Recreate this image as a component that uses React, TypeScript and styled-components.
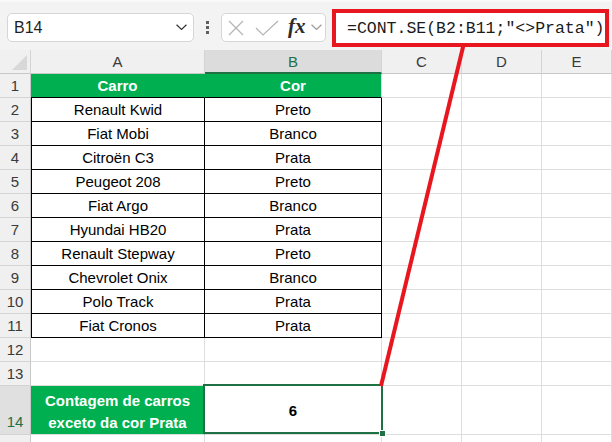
import React from "react";
import styled, { createGlobalStyle, css } from "styled-components";

const GlobalStyle = createGlobalStyle`
  html, body {
    margin: 0;
    padding: 0;
    background: #fff;
  }
  body {
    overflow: hidden;
    font-family: "Liberation Sans", Arial, sans-serif;
  }
`;

const GREEN_FILL = "#00b050";
const SEL_GREEN = "#1e7145";
const GRID = "#dedede";
const RED = "#e8161e";

const Page = styled.div`
  position: relative;
  width: 612px;
  height: 442px;
  overflow: hidden;
  background: #fff;
`;

const Toolbar = styled.div`
  box-sizing: border-box;
  height: 50px;
  display: flex;
  align-items: flex-start;
  padding: 13px 0 0 7px;
  background: #f3f3f3;
  border-top: 2px solid #f9f9f9;
`;

const NameBox = styled.div`
  box-sizing: border-box;
  width: 187px;
  height: 29px;
  margin-top: -2px;
  display: flex;
  align-items: center;
  justify-content: space-between;
  padding: 0 6px 0 6px;
  background: #fff;
  border: 1px solid #d6d6d6;
  border-radius: 5px;
  font-size: 16px;
  color: #1f1f1f;
`;

const Dots = styled.div`
  margin: 6px 0 0 12px;
  display: flex;
  flex-direction: column;
  gap: 2px;

  i {
    display: block;
    width: 3px;
    height: 3px;
    background: #5f5f5f;
  }
`;

const FxBox = styled.div`
  box-sizing: border-box;
  width: 105px;
  height: 29px;
  margin: -2px 0 0 12px;
  display: flex;
  align-items: center;
  padding-left: 6px;
  background: #fff;
  border: 1px solid #d6d6d6;
  border-radius: 5px;
`;

const Fx = styled.span`
  margin: 0 5px 2px 9px;
  font-family: "Liberation Serif", "Times New Roman", serif;
  font-style: italic;
  font-weight: 600;
  font-size: 21px;
  color: #2b2b2b;
  line-height: 1;
`;

const FormulaBar = styled.div`
  box-sizing: border-box;
  width: 277px;
  height: 38px;
  margin: -6px 0 0 6px;
  display: flex;
  align-items: center;
  padding-left: 11px;
  background: #fff;
  border: 4px solid ${RED};
  font-family: "Liberation Mono", "Courier New", monospace;
  font-size: 16.5px;
  color: #1a1a1a;
  white-space: pre;
`;

const Sheet = styled.div`
  display: grid;
  grid-template-columns: 31px 174px 177px 80px 80px 1fr;
  grid-template-rows: 24px repeat(13, 24px) 49px 24px;
  font-size: 15px;
`;

const Corner = styled.div`
  box-sizing: border-box;
  display: flex;
  align-items: flex-end;
  justify-content: flex-end;
  padding: 0 3px 3px 0;
  background: #f0f0f0;
  border-right: 1px solid #d4d4d4;
  border-bottom: 1px solid #c8c8c8;

  i {
    display: block;
    width: 15px;
    height: 15px;
    background: #d8d8d8;
    clip-path: polygon(100% 0, 100% 100%, 0 100%);
  }
`;

const ColHead = styled.div<{ $active?: boolean }>`
  box-sizing: border-box;
  display: flex;
  align-items: center;
  justify-content: center;
  background: ${({ $active }) => ($active ? "#dcdcdc" : "#f0f0f0")};
  color: ${({ $active }) => ($active ? SEL_GREEN : "#3a3a3a")};
  border-right: 1px solid #d4d4d4;
  border-bottom: ${({ $active }) =>
    $active ? `2px solid ${SEL_GREEN}` : "1px solid #c8c8c8"};
  padding-top: ${({ $active }) => ($active ? "1px" : "0")};
`;

const RowHead = styled.div<{ $active?: boolean }>`
  box-sizing: border-box;
  display: flex;
  align-items: ${({ $active }) => ($active ? "flex-end" : "center")};
  justify-content: center;
  padding-bottom: ${({ $active }) => ($active ? "4px" : "0")};
  background: ${({ $active }) => ($active ? "#e0e0e0" : "#f0f0f0")};
  color: ${({ $active }) => ($active ? SEL_GREEN : "#3a3a3a")};
  border-right: 1px solid #c8c8c8;
  border-bottom: 1px solid #d4d4d4;
`;

type Kind = "blank" | "title" | "data" | "label" | "result";

const Cell = styled.div<{ $kind: Kind; $first?: boolean }>`
  box-sizing: border-box;
  position: relative;
  display: flex;
  align-items: center;
  justify-content: center;
  text-align: center;
  color: #000;
  border-right: 1px solid ${GRID};
  border-bottom: 1px solid ${GRID};

  ${({ $kind, $first }) => {
    switch ($kind) {
      case "title":
        return css`
          background: ${GREEN_FILL};
          color: #fff;
          font-weight: bold;
          border-bottom-color: #000;
          border-right-color: ${$first ? GREEN_FILL : GRID};
        `;
      case "data":
        return css`
          border-right-color: #000;
          border-bottom-color: #000;
          ${$first && "border-left: 1px solid #000;"}
        `;
      case "label":
        return css`
          background: ${GREEN_FILL};
          color: #fff;
          font-weight: bold;
          line-height: 22px;
          padding-top: 3px;
          border-right-color: ${GREEN_FILL};
        `;
      case "result":
        return css`
          font-weight: bold;
          z-index: 2;
          &::after {
            content: "";
            position: absolute;
            left: -2px;
            top: -2px;
            right: -2px;
            bottom: 0;
            border: 2px solid ${SEL_GREEN};
          }
          &::before {
            content: "";
            position: absolute;
            right: -5px;
            bottom: -3px;
            width: 5px;
            height: 5px;
            background: ${SEL_GREEN};
            border: 1px solid #fff;
            z-index: 3;
          }
        `;
      default:
        return "";
    }
  }}
`;

const Callout = styled.svg`
  position: absolute;
  left: 0;
  top: 0;
  pointer-events: none;
  z-index: 5;
`;

const cars: [string, string][] = [
  ["Renault Kwid", "Preto"],
  ["Fiat Mobi", "Branco"],
  ["Citroën C3", "Prata"],
  ["Peugeot 208", "Preto"],
  ["Fiat Argo", "Branco"],
  ["Hyundai HB20", "Prata"],
  ["Renault Stepway", "Preto"],
  ["Chevrolet Onix", "Branco"],
  ["Polo Track", "Prata"],
  ["Fiat Cronos", "Prata"],
];

const columns = ["A", "B", "C", "D", "E"];

const Chevron = ({ size, color }: { size: number; color: string }) => (
  <svg width={size} height={size * 0.6} viewBox="0 0 10 6">
    <polyline
      points="0.5,0.7 5,5 9.5,0.7"
      fill="none"
      stroke={color}
      strokeWidth="1.1"
    />
  </svg>
);

const Blanks = ({ row }: { row: number }) => (
  <>
    <RowHead>{row}</RowHead>
    {columns.map((c) => (
      <Cell key={c} $kind="blank" />
    ))}
  </>
);

const App = () => {
  return (
    <Page>
      <GlobalStyle />
      <Toolbar>
        <NameBox>
          <span>B14</span>
          <Chevron size={11} color="#333" />
        </NameBox>
        <Dots>
          <i />
          <i />
          <i />
        </Dots>
        <FxBox>
          <svg width="16" height="16" viewBox="0 0 16 16">
            <path d="M1 1 L15 15 M15 1 L1 15" stroke="#b4b4b4" strokeWidth="1.2" />
          </svg>
          <svg width="24" height="16" viewBox="0 0 24 16" style={{ marginLeft: 11 }}>
            <polyline points="1,8 8,15 23,1" fill="none" stroke="#b4b4b4" strokeWidth="1.2" />
          </svg>
          <Fx>fx</Fx>
          <Chevron size={11} color="#999" />
        </FxBox>
        <FormulaBar>{'=CONT.SE(B2:B11;"<>Prata")'}</FormulaBar>
      </Toolbar>

      <Sheet>
        <Corner>
          <i />
        </Corner>
        {columns.map((c) => (
          <ColHead key={c} $active={c === "B"}>
            {c}
          </ColHead>
        ))}

        <RowHead>1</RowHead>
        <Cell $kind="title" $first>
          Carro
        </Cell>
        <Cell $kind="title">Cor</Cell>
        <Cell $kind="blank" />
        <Cell $kind="blank" />
        <Cell $kind="blank" />

        {cars.map(([car, color], i) => (
          <React.Fragment key={car}>
            <RowHead>{i + 2}</RowHead>
            <Cell $kind="data" $first>
              {car}
            </Cell>
            <Cell $kind="data">{color}</Cell>
            <Cell $kind="blank" />
            <Cell $kind="blank" />
            <Cell $kind="blank" />
          </React.Fragment>
        ))}

        <Blanks row={12} />
        <Blanks row={13} />

        <RowHead $active>14</RowHead>
        <Cell $kind="label">
          Contagem de carros
          <br />
          exceto da cor Prata
        </Cell>
        <Cell $kind="result">6</Cell>
        <Cell $kind="blank" />
        <Cell $kind="blank" />
        <Cell $kind="blank" />

        <Blanks row={15} />
      </Sheet>

      <Callout width="612" height="442" viewBox="0 0 612 442">
        <line x1="463.5" y1="45" x2="381" y2="386" stroke={RED} strokeWidth="4" />
      </Callout>
    </Page>
  );
};

export default App;
